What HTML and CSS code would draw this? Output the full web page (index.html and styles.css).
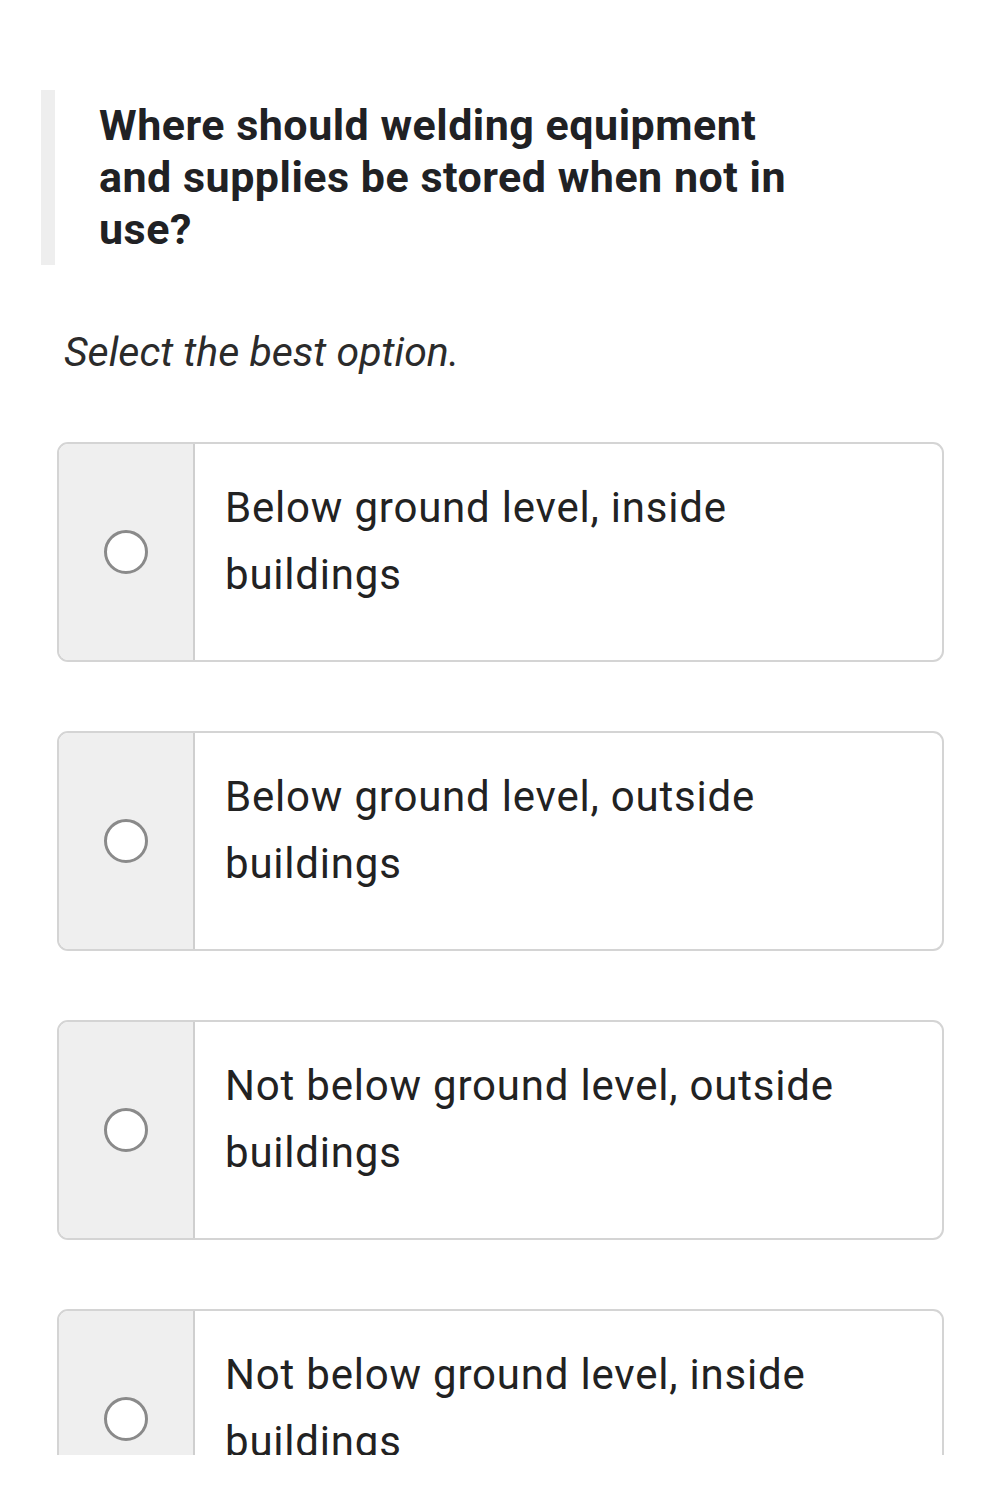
FILE: index.html
```html
<!DOCTYPE html>
<html lang="en">
<head>
    <meta charset="UTF-8">
    <title>Quiz question</title>
    <link rel="stylesheet" href="styles.css">
</head>

<body>
    <main class="page">
        <!--1. question-->
        <blockquote class="qtit">
            Where should welding equipment and supplies be stored when not in use?
        </blockquote>

        <p class="hint">Select the best option.</p>

        <!--2. options-->
        <ul class="opts">
            <li class="opt">
                <span class="mark"><span class="radio"></span></span>
                <span class="label">Below ground level, inside buildings</span>
            </li>
            <li class="opt">
                <span class="mark"><span class="radio"></span></span>
                <span class="label">Below ground level, outside buildings</span>
            </li>
            <li class="opt">
                <span class="mark"><span class="radio"></span></span>
                <span class="label">Not below ground level, outside buildings</span>
            </li>
            <li class="opt">
                <span class="mark"><span class="radio"></span></span>
                <span class="label">Not below ground level, inside buildings</span>
            </li>
        </ul>
    </main>
</body>
</html>
```

FILE: styles.css
```css
html,
body,
ul,
p,
blockquote {
    margin: 0;
    padding: 0;
}

body {
    background-color: #fff;
    font-family: Roboto, "Liberation Sans", sans-serif;
    color: #212121;
}

/*scroll area - cut at the bottom*/
.page {
    height: 1455px;
    overflow: hidden;
    padding: 90px 50px 0 57px;
    box-sizing: border-box;
}

/*1.question*/
.qtit {
    margin-left: -16px;
    width: 700px;
    padding: 9px 0 10px 44px;
    border-left: 14px solid #eeeeee;
    font-size: 43px;
    font-weight: bold;
    letter-spacing: 0.5px;
    line-height: 52px;
    color: #202124;
}

/*hint under question*/
.hint {
    margin: 61px 0 0 7px;
    font-size: 41px;
    font-style: italic;
    line-height: 52px;
    color: #2b2b2b;
}

/*2.options*/
.opts {
    list-style: none;
    margin-top: 64px;
    display: flex;
    flex-direction: column;
    gap: 69px;
}

.opt {
    display: flex;
    width: 887px;
    height: 220px;
    box-sizing: border-box;
    border: 2px solid #d4d4d4;
    border-radius: 11px;
    overflow: hidden;
}

/*radio column*/
.mark {
    flex: none;
    width: 134px;
    display: flex;
    align-items: center;
    justify-content: center;
    background-color: #efefef;
    border-right: 2px solid #cfcfcf;
}

.radio {
    width: 38px;
    height: 38px;
    border: 3px solid #8a8a8a;
    border-radius: 50%;
    background-color: #fff;
}

.label {
    padding: 30px 90px 0 30px;
    font-size: 42px;
    letter-spacing: 0.8px;
    line-height: 67px;
    color: #222;
}
```
